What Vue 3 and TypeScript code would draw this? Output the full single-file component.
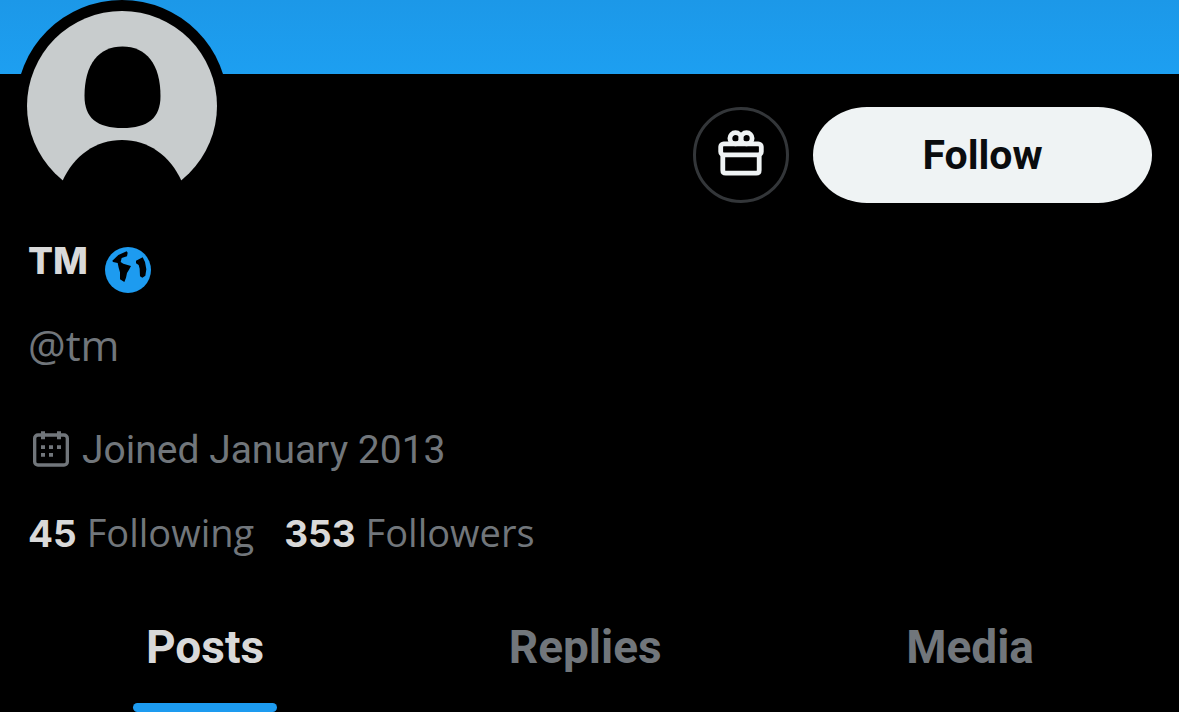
<script setup lang="ts">
import { ref } from 'vue'

interface Stat {
  count: number
  label: string
}

const stats: Stat[] = [
  { count: 45, label: 'Following' },
  { count: 353, label: 'Followers' },
]

const tabs: string[] = ['Posts', 'Replies', 'Media']
const activeTab = ref<string>('Posts')
const following = ref<boolean>(false)
</script>

<template>
  <main class="profile">
    <div class="banner"></div>

    <div class="top">
      <div class="avatar">
        <svg viewBox="0 0 190 190" role="img" aria-label="Profile picture">
          <circle cx="95" cy="95" r="95" fill="#c8cccd" />
          <path
            d="M95.5 35.5C119 35.5 133.5 53 133.5 85C133.5 107 121 117 95.5 117C70 117 57.5 107 57.5 85C57.5 53 72 35.5 95.5 35.5Z"
            fill="#000"
          />
          <path d="M35 171C47 144 69 129 95 129S143 144 155 171L158 192H32Z" fill="#000" />
        </svg>
      </div>

      <div class="actions">
        <button class="gift" type="button" aria-label="Gift Premium">
          <svg viewBox="0 0 54 54" fill="none" stroke="#eff3f4" stroke-width="4.8">
            <circle cx="21.5" cy="10.3" r="5.6" />
            <circle cx="32.5" cy="10.3" r="5.6" />
            <rect x="6.7" y="15.8" width="40.6" height="11" rx="3" />
            <path d="M8.8 26.8V42.2Q8.8 45.2 11.8 45.2H42.2Q45.2 45.2 45.2 42.2V26.8" />
          </svg>
        </button>
        <button class="follow" type="button" :aria-pressed="following" @click="following = !following">
          Follow
        </button>
      </div>
    </div>

    <section class="details">
      <h1 class="name">
        <span>TM</span>
        <svg viewBox="0 0 138 138" aria-hidden="true">
          <circle cx="69" cy="69" r="69" fill="#1d9bf0" />
          <path
            d="M22 41L40 24L65 13L68 17L66 28L50 33L47 45L55 50L78 57L72 68L66 78L63 92L58 105L45 97L45 76L41 62L38 48L24 45Z"
            fill="#000"
          />
          <path d="M93 41L113 31L120 45L124 67L121 86L112 92L105 88L104 65L101 54L93 49Z" fill="#000" />
        </svg>
      </h1>
      <p class="handle">@tm</p>
      <p class="joined">
        <svg viewBox="0 0 108 108" fill="#71767b" aria-hidden="true">
          <rect x="5" y="12" width="98" height="90" rx="10" fill="none" stroke="#71767b" stroke-width="10" />
          <path d="M24 1H36V25H24ZM72 1H84V25H72Z" />
          <path d="M24 43H36V54H24ZM48 43H60V54H48ZM72 43H84V54H72ZM24 66H36V77H24ZM48 66H60V77H48Z" />
        </svg>
        <span>Joined January 2013</span>
      </p>
      <ul class="stats">
        <li v-for="stat in stats" :key="stat.label">
          <a href="#"><strong>{{ stat.count }}</strong><span>{{ stat.label }}</span></a>
        </li>
      </ul>
    </section>

    <nav class="tabs" role="tablist" aria-label="Profile timelines">
      <button
        v-for="tab in tabs"
        :key="tab"
        type="button"
        role="tab"
        class="tab"
        :class="{ active: tab === activeTab }"
        :aria-selected="tab === activeTab"
        @click="activeTab = tab"
      >
        {{ tab }}
      </button>
    </nav>
  </main>
</template>

<style>
body {
  margin: 0;
  background: #000;
}
</style>

<style scoped>
.profile {
  background: #000;
  color: #d9d9d9;
  font-family: 'Open Sans', 'Noto Sans', sans-serif;
  overflow: hidden;
}

.banner {
  height: 74px;
  background: linear-gradient(#1c98e8, #1d9ff1);
}

.top {
  display: flex;
  justify-content: space-between;
  align-items: flex-end;
  margin-top: -74px;
  padding: 0 27px 0 16px;
}

.avatar {
  position: relative;
  box-sizing: border-box;
  width: 212px;
  height: 212px;
  padding: 11px;
  border-radius: 50%;
  background: #000;
}

.avatar svg {
  display: block;
  width: 190px;
  height: 190px;
}

.actions {
  display: flex;
  gap: 24px;
  padding-bottom: 9px;
}

button {
  margin: 0;
  padding: 0;
  border: 0;
  background: none;
  font-family: inherit;
  cursor: pointer;
}

.gift {
  display: grid;
  place-items: center;
  box-sizing: border-box;
  width: 96px;
  height: 96px;
  border: 3px solid #333639;
  border-radius: 50%;
}

.gift svg {
  width: 54px;
  height: 54px;
}

.follow {
  width: 339px;
  height: 96px;
  border-radius: 54px / 48px;
  background: #eff3f4;
  color: #0a0c0e;
  font: 700 41px/48px Roboto, sans-serif;
}

.details {
  padding: 0 28px;
}

.name {
  display: flex;
  align-items: center;
  gap: 17px;
  height: 48px;
  margin: 34px 0 0;
  font: 800 37px/48px Inter, sans-serif;
}

.name span {
  padding-bottom: 18px;
}

.name svg {
  width: 46px;
  height: 46px;
}

.handle {
  margin: 23px 0 0;
  color: #71767b;
  font-size: 42px;
  line-height: 56px;
}

.joined {
  display: flex;
  align-items: center;
  gap: 13px;
  margin: 47px 0 0;
  padding-left: 5px;
  color: #71767b;
  font-family: Roboto, sans-serif;
  font-size: 39px;
  line-height: 56px;
}

.joined span {
  padding-top: 2px;
}

.joined svg {
  width: 36px;
  height: 36px;
}

.stats {
  display: flex;
  gap: 30px;
  margin: 26px 0 0;
  padding: 0;
  list-style: none;
  font-size: 38px;
  line-height: 56px;
}

.stats a {
  display: flex;
  align-items: baseline;
  gap: 10px;
  color: #71767b;
  text-decoration: none;
}

.stats strong {
  color: #d9d9d9;
  font-family: Inter, sans-serif;
  font-size: 37px;
  font-weight: 700;
}

.tabs {
  display: flex;
  justify-content: space-between;
  margin-top: 53px;
  padding: 0 132px 0 133px;
}

.tab {
  display: flex;
  flex-direction: column;
  align-items: center;
  gap: 24px;
  padding: 0 13px;
  color: #71767b;
  font-family: Roboto, sans-serif;
  font-size: 46px;
  font-weight: 700;
  line-height: 64px;
}

.tab::after {
  content: '';
  align-self: stretch;
  height: 9px;
  margin: 0 -13px;
  border-radius: 5px;
}

.active {
  color: #d9d9d9;
}

.active::after {
  background: #1d9bf0;
}
</style>
